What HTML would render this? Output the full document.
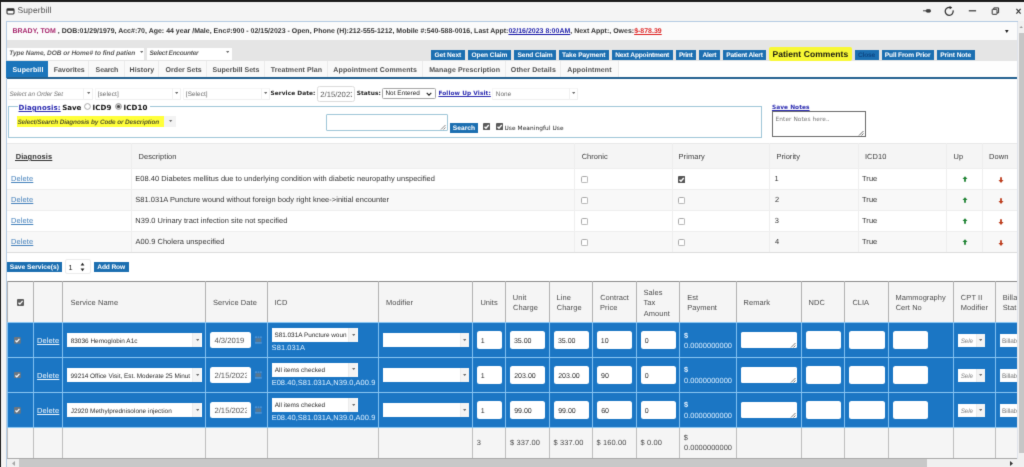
<!DOCTYPE html><html><head><meta charset="utf-8"><title>Superbill</title><style>
*{box-sizing:border-box;margin:0;padding:0}
html,body{width:1024px;height:467px;overflow:hidden;background:#fff}
body{position:relative;filter:url(#sf);text-rendering:geometricPrecision;font-family:"Liberation Sans",sans-serif;font-size:8px;color:#444}
.a{position:absolute;white-space:nowrap}
.t{position:absolute;white-space:nowrap;line-height:1}
.ver{font-family:"DejaVu Sans","Liberation Sans",sans-serif}
.btn{position:absolute;background:#1c6fb1;overflow:hidden}
.bt{position:absolute;white-space:nowrap;line-height:1;color:#fff;font-weight:bold}
.cb{position:absolute;background:#fff;overflow:hidden;white-space:nowrap}
.ar{position:absolute;width:0;height:0;border-left:2px solid transparent;border-right:2px solid transparent;border-top:2.4px solid #5a5a5a}
.inp{position:absolute;background:#fff;border-radius:2.5px;overflow:hidden;white-space:nowrap}
</style></head><body>
<svg width="0" height="0" style="position:absolute"><filter id="sf" x="0" y="0" width="100%" height="100%" color-interpolation-filters="sRGB"><feConvolveMatrix order="3" kernelMatrix="0.011 0.084 0.011 0.084 0.62 0.084 0.011 0.084 0.011" edgeMode="duplicate" preserveAlpha="true"/></filter></svg>
<div class="a" style="left:0px;top:0px;width:1024px;height:467px;background:#f4f4f4"></div>
<div class="a" style="left:0px;top:0px;width:1024px;height:1.8px;background:#1c1c1c"></div>
<div class="a" style="left:0px;top:0px;width:1.2px;height:467px;background:#1c1c1c"></div>
<svg class="a" style="left:6.2px;top:7.6px" width="9" height="7" viewBox="0 0 9 7"><rect x="1" y="0.9" width="7" height="5.1" rx="0.9" fill="#fff" stroke="#2a2a2a" stroke-width="1.1"/><rect x="1" y="0.9" width="7" height="1.8" rx="0.6" fill="#2a2a2a"/></svg>
<div class="t" style="left:17.42px;top:6px;font-size:8.5px;color:#505050;letter-spacing:0.12px;">Superbill</div>
<svg class="a" style="left:920px;top:4px" width="104" height="14" viewBox="0 0 104 14"><g fill="none" stroke="#333" stroke-width="1"><path d="M3 6.8 H6.2" stroke-width="0.9"/><rect x="6.2" y="5.6" width="4.3" height="2.6" rx="0.9" fill="#444" stroke="#222" stroke-width="0.6"/><path d="M31.3 3.9 A4 4 0 1 0 33.1 6.4" stroke-width="1.3"/><path d="M29.6 1.9 L32.2 3.6 L29.7 5.2 Z" stroke="none" fill="#2a2a2a"/><path d="M48.8 6.8 H56.1" stroke-width="1.2"/><rect x="72.2" y="5.3" width="4.8" height="5" rx="0.4"/><path d="M73.8 5.3 V3.9 H78.6 V8.8 H77"/><path d="M96.4 4.9 L100.6 9.6 M100.6 4.9 L96.4 9.6" stroke-width="1.15"/></g></svg>
<div class="a" style="left:6px;top:20.7px;width:1011.6px;height:446.3px;background:#fff;border:1px solid #b4cbe3;border-bottom:none"></div>
<div class="a" style="left:7px;top:21.7px;width:1009.6px;height:18.3px;background:#fbfbfb"></div>
<div class="t" style="left:12.51px;top:29px;font-size:6.95px;font-weight:bold;color:#333;letter-spacing:0.028px;"><span style="color:#a8286e">BRADY, TOM</span> , DOB:01/29/1979, Acc#:70, Age: 44 year /Male, Enc#:900 - 02/15/2023 - Open, Phone (H):212-555-1212, Mobile #:540-588-0016, Last Appt:<span style="color:#1a1aa8;text-decoration:underline">02/16/2023 8:00AM</span>, Next Appt:, Owes:<span style="color:#d22;text-decoration:underline">$-878.39</span></div>
<svg class="a" style="left:1005.3px;top:29.7px" width="3.6" height="3" viewBox="0 0 10 10" preserveAspectRatio="none"><path d="M0 0 H10 L5 10 Z" fill="#1a1a1a"/></svg>
<div class="a" style="left:7px;top:40px;width:1009.6px;height:21.3px;background:#e5e5e5"></div>
<div class="a" style="left:7px;top:47.5px;width:137px;height:12.7px;background:#fff"></div>
<div class="t" style="left:9.22px;top:51px;font-size:6.5px;font-style:italic;font-weight:bold;color:#5a5a5a;letter-spacing:-0.021px;">Type Name, DOB or Home# to find patien</div>
<svg class="a" style="left:139.75px;top:50.55px" width="3.3" height="2.1" viewBox="0 0 10 10" preserveAspectRatio="none"><path d="M0 0 H10 L5 10 Z" fill="#707070"/></svg>
<div class="a" style="left:146.75px;top:47.5px;width:85px;height:12.7px;background:#fff"></div>
<div class="t" style="left:149.55px;top:51px;font-size:6.5px;font-style:italic;font-weight:bold;color:#5a5a5a;letter-spacing:-0.275px;">Select Encounter</div>
<svg class="a" style="left:225.85px;top:50.55px" width="3.3" height="2.1" viewBox="0 0 10 10" preserveAspectRatio="none"><path d="M0 0 H10 L5 10 Z" fill="#707070"/></svg>
<div class="btn" style="left:431.1px;top:50px;width:33.89999999999998px;height:10px;"></div>
<div class="bt" style="left:434.47px;top:53px;font-size:6.6px;color:#fff;letter-spacing:-0.045px;">Get Next</div>
<div class="btn" style="left:468px;top:50px;width:42.89999999999998px;height:10px;"></div>
<div class="bt" style="left:471.41px;top:53px;font-size:6.6px;color:#fff;letter-spacing:-0.066px;">Open Claim</div>
<div class="btn" style="left:514.25px;top:50px;width:41.75px;height:10px;"></div>
<div class="bt" style="left:517.51px;top:53px;font-size:6.6px;color:#fff;letter-spacing:-0.09px;">Send Claim</div>
<div class="btn" style="left:558.9px;top:50px;width:50.0px;height:10px;"></div>
<div class="bt" style="left:562.03px;top:53px;font-size:6.6px;color:#fff;letter-spacing:-0.05px;">Take Payment</div>
<div class="btn" style="left:612px;top:50px;width:60.75px;height:10px;"></div>
<div class="bt" style="left:615.29px;top:53px;font-size:6.6px;color:#fff;letter-spacing:-0.17px;">Next Appointment</div>
<div class="btn" style="left:675.6px;top:50px;width:20.649999999999977px;height:10px;"></div>
<div class="bt" style="left:678.94px;top:53px;font-size:6.6px;color:#fff;letter-spacing:-0.291px;">Print</div>
<div class="btn" style="left:699.1px;top:50px;width:20.899999999999977px;height:10px;"></div>
<div class="bt" style="left:702.48px;top:53px;font-size:6.6px;color:#fff;letter-spacing:-0.232px;">Alert</div>
<div class="btn" style="left:722.9px;top:50px;width:43.60000000000002px;height:10px;"></div>
<div class="bt" style="left:726.24px;top:53px;font-size:6.6px;color:#fff;letter-spacing:-0.164px;">Patient Alert</div>
<div class="btn" style="left:881.5px;top:50px;width:52.39999999999998px;height:10px;"></div>
<div class="bt" style="left:884.8px;top:53px;font-size:6.6px;color:#fff;letter-spacing:-0.135px;">Pull From Prior</div>
<div class="btn" style="left:937px;top:50px;width:37.5px;height:10px;"></div>
<div class="bt" style="left:940.29px;top:53px;font-size:6.6px;color:#fff;letter-spacing:-0.078px;">Print Note</div>
<div class="btn" style="left:854.6px;top:50px;width:24.0px;height:10px;"></div>
<div class="bt" style="left:858.02px;top:53px;font-size:6.6px;color:#0e4683;letter-spacing:-0.205px;">Close</div>
<div class="a" style="left:769.25px;top:47.25px;width:82.5px;height:13.4px;background:#f8f835;border-radius:2px"></div>
<div class="t" style="left:772.4px;top:50px;font-size:8.5px;font-weight:bold;color:#1a1a10;letter-spacing:0.078px;">Patient Comments</div>
<div class="a" style="left:7px;top:61.3px;width:1009.6px;height:16px;background:#fefefe"></div>
<div class="a" style="left:6.25px;top:61px;width:41.85px;height:17px;background:#1b75bb"></div>
<div class="t" style="left:12.48px;top:67px;font-size:7.0px;font-weight:bold;color:#fff;letter-spacing:0.12px;">Superbill</div>
<div class="a" style="left:48.1px;top:61.3px;width:41.300000000000004px;height:16px;background:#f9f9f9;border-right:1px solid #ebebeb"></div>
<div class="t" style="left:53.66px;top:67px;font-size:7.0px;font-weight:bold;color:#505050;letter-spacing:-0.007px;">Favorites</div>
<div class="a" style="left:89.4px;top:61.3px;width:35.19999999999999px;height:16px;background:#f9f9f9;border-right:1px solid #ebebeb"></div>
<div class="t" style="left:95.6px;top:67px;font-size:7.0px;font-weight:bold;color:#505050;letter-spacing:-0.125px;">Search</div>
<div class="a" style="left:124.6px;top:61.3px;width:34.650000000000006px;height:16px;background:#f9f9f9;border-right:1px solid #ebebeb"></div>
<div class="t" style="left:129.5px;top:67px;font-size:7.0px;font-weight:bold;color:#505050;letter-spacing:0.106px;">History</div>
<div class="a" style="left:159.25px;top:61.3px;width:47.25px;height:16px;background:#f9f9f9;border-right:1px solid #ebebeb"></div>
<div class="t" style="left:165.62px;top:67px;font-size:7.0px;font-weight:bold;color:#505050;letter-spacing:0.039px;">Order Sets</div>
<div class="a" style="left:206.5px;top:61.3px;width:58.25px;height:16px;background:#f9f9f9;border-right:1px solid #ebebeb"></div>
<div class="t" style="left:212.53px;top:67px;font-size:7.0px;font-weight:bold;color:#505050;letter-spacing:0.01px;">Superbill Sets</div>
<div class="a" style="left:264.75px;top:61.3px;width:62.75px;height:16px;background:#f9f9f9;border-right:1px solid #ebebeb"></div>
<div class="t" style="left:270.65px;top:67px;font-size:7.0px;font-weight:bold;color:#505050;letter-spacing:0.096px;">Treatment Plan</div>
<div class="a" style="left:327.5px;top:61.3px;width:95.89999999999998px;height:16px;background:#f9f9f9;border-right:1px solid #ebebeb"></div>
<div class="t" style="left:333.34px;top:67px;font-size:7.0px;font-weight:bold;color:#505050;letter-spacing:0.12px;">Appointment Comments</div>
<div class="a" style="left:423.4px;top:61.3px;width:82.5px;height:16px;background:#f9f9f9;border-right:1px solid #ebebeb"></div>
<div class="t" style="left:429.16px;top:67px;font-size:7.0px;font-weight:bold;color:#505050;letter-spacing:0.11px;">Manage Prescription</div>
<div class="a" style="left:505.9px;top:61.3px;width:55.5px;height:16px;background:#f9f9f9;border-right:1px solid #ebebeb"></div>
<div class="t" style="left:510.82px;top:67px;font-size:7.0px;font-weight:bold;color:#505050;letter-spacing:0.12px;">Other Details</div>
<div class="a" style="left:561.4px;top:61.3px;width:57.60000000000002px;height:16px;background:#f9f9f9;border-right:1px solid #ebebeb"></div>
<div class="t" style="left:567.23px;top:67px;font-size:7.0px;font-weight:bold;color:#505050;letter-spacing:0.12px;">Appointment</div>
<div class="a" style="left:7px;top:77.25px;width:1010.6px;height:1.8px;background:#23608f"></div>
<div class="a" style="left:8.4px;top:88.4px;width:84.19999999999999px;height:11.4px;background:#fff;border:1px solid #f0f0f0;border-top-color:#f6f6f6;border-left-color:#f6f6f6"></div>
<div class="a" style="left:83.3px;top:88.4px;width:1px;height:11.4px;background:#f1f1f1"></div>
<div class="t" style="left:9.46px;top:92px;font-size:6.4px;font-style:italic;color:#7a7a7a;letter-spacing:-0.145px;">Select an Order Set</div>
<svg class="a" style="left:86.5px;top:92.35px" width="3.3" height="2.1" viewBox="0 0 10 10" preserveAspectRatio="none"><path d="M0 0 H10 L5 10 Z" fill="#707070"/></svg>
<div class="a" style="left:95px;top:88.4px;width:85.80000000000001px;height:11.4px;background:#fff;border:1px solid #f0f0f0;border-top-color:#f6f6f6;border-left-color:#f6f6f6"></div>
<div class="a" style="left:171.5px;top:88.4px;width:1px;height:11.4px;background:#f1f1f1"></div>
<div class="t" style="left:97.64px;top:92px;font-size:6.4px;color:#6a6a6a;letter-spacing:0.12px;">[select]</div>
<svg class="a" style="left:174.7px;top:92.35px" width="3.3" height="2.1" viewBox="0 0 10 10" preserveAspectRatio="none"><path d="M0 0 H10 L5 10 Z" fill="#707070"/></svg>
<div class="a" style="left:183.25px;top:88.4px;width:86.75px;height:11.4px;background:#fff;border:1px solid #f0f0f0;border-top-color:#f6f6f6;border-left-color:#f6f6f6"></div>
<div class="a" style="left:260.7px;top:88.4px;width:1px;height:11.4px;background:#f1f1f1"></div>
<div class="t" style="left:185.8px;top:92px;font-size:6.4px;color:#6a6a6a;letter-spacing:0.076px;">[Select]</div>
<svg class="a" style="left:263.9px;top:92.35px" width="3.3" height="2.1" viewBox="0 0 10 10" preserveAspectRatio="none"><path d="M0 0 H10 L5 10 Z" fill="#707070"/></svg>
<div class="t ver" style="left:270.45px;top:92px;font-size:5.85px;font-weight:bold;color:#222;letter-spacing:0.067px;">Service Date:</div>
<div class="a" style="left:317.25px;top:85.6px;width:37.5px;height:16px;border:1px solid #dcdcdc;background:#fff;border-radius:2.5px;overflow:hidden"></div>
<div class="a" style="left:318.3px;top:88px;width:34.0px;height:16.0px;overflow:hidden"><div class="t" style="left:1.96px;top:3px;font-size:7.7px;color:#5a5a5a;">2/15/2023</div></div>
<div class="t ver" style="left:356.72px;top:92px;font-size:5.85px;font-weight:bold;color:#222;letter-spacing:0.054px;">Status:</div>
<div class="a" style="left:382px;top:88.1px;width:54px;height:10.6px;border:1px solid #a6a6a6;border-radius:1.5px;background:#fff"></div>
<div class="t" style="left:385.49px;top:91px;font-size:6.4px;color:#222;letter-spacing:0.025px;">Not Entered</div>
<svg class="a" style="left:426.4px;top:91.6px" width="6" height="4.4" viewBox="0 0 6 4.4"><path d="M0.7 0.8 L3 3.2 L5.3 0.8" fill="none" stroke="#222" stroke-width="1.1"/></svg>
<div class="t ver" style="left:438.44px;top:92px;font-size:5.85px;font-weight:bold;color:#2a2ab0;text-decoration:underline;letter-spacing:0.073px;">Follow Up Visit:</div>
<div class="a" style="left:492px;top:88.4px;width:86.25px;height:11.4px;background:#fff;border:1px solid #f0f0f0;border-top-color:#f6f6f6;border-left-color:#f6f6f6"></div>
<div class="a" style="left:568.95px;top:88.4px;width:1px;height:11.4px;background:#f1f1f1"></div>
<div class="t" style="left:495.69px;top:92px;font-size:6.4px;color:#6a6a6a;letter-spacing:0.12px;">None</div>
<svg class="a" style="left:572.15px;top:92.35px" width="3.3" height="2.1" viewBox="0 0 10 10" preserveAspectRatio="none"><path d="M0 0 H10 L5 10 Z" fill="#707070"/></svg>
<div class="a" style="left:8.4px;top:106.4px;width:753.4px;height:31.4px;border:1px solid #9ec6d8;background:#fff"></div>
<div class="a" style="left:17.5px;top:103px;width:132.5px;height:9px;background:#fff"></div>
<div class="t ver" style="left:18.54px;top:104px;font-size:7.05px;font-weight:bold;color:#2a2ab0;text-decoration:underline;letter-spacing:0.063px;">Diagnosis:</div>
<div class="t ver" style="left:62.3px;top:104px;font-size:7.05px;font-weight:bold;color:#111;letter-spacing:-0.035px;">Save</div>
<svg class="a" style="left:83.5px;top:103.2px" width="7" height="7" viewBox="0 0 7 7"><circle cx="3.5" cy="3.5" r="2.9" fill="#fff" stroke="#a0a0a0" stroke-width="0.9"/></svg>
<div class="t ver" style="left:92.44px;top:104px;font-size:7.05px;font-weight:bold;color:#111;letter-spacing:0.12px;">ICD9</div>
<svg class="a" style="left:115.2px;top:103.2px" width="7" height="7" viewBox="0 0 7 7"><circle cx="3.5" cy="3.5" r="2.9" fill="#d8d8d8" stroke="#909090" stroke-width="0.9"/><circle cx="3.5" cy="3.5" r="1.6" fill="#4a4a4a"/></svg>
<div class="t ver" style="left:123.44px;top:104px;font-size:7.05px;font-weight:bold;color:#111;letter-spacing:0.12px;">ICD10</div>
<div class="a" style="left:17.2px;top:115.7px;width:146.8px;height:11.3px;background:#ffff3a"></div>
<div class="t" style="left:17.42px;top:120px;font-size:6.4px;font-style:italic;font-weight:bold;color:#55552a;letter-spacing:-0.102px;">Select/Search Diagnosis by Code or Description</div>
<div class="a" style="left:164px;top:115.7px;width:11.9px;height:11.3px;background:#f3f3f3"></div>
<svg class="a" style="left:169.35px;top:119.95px" width="3.3" height="2.1" viewBox="0 0 10 10" preserveAspectRatio="none"><path d="M0 0 H10 L5 10 Z" fill="#707070"/></svg>
<div class="a" style="left:326px;top:113.5px;width:121.6px;height:17px;border:1px solid #9ec6d8;background:#fff;border-radius:1px"></div>
<svg class="a" style="left:440px;top:124px" width="6" height="6" viewBox="0 0 6 6"><path d="M5.5 1 L1 5.5 M5.5 3.5 L3.5 5.5" stroke="#666" stroke-width="0.8" fill="none"/></svg>
<div class="btn" style="left:450px;top:123px;width:28px;height:9.5px;"></div>
<div class="bt" style="left:452.86px;top:126px;font-size:6.6px;color:#fff;letter-spacing:0.015px;">Search</div>
<svg class="a" style="left:483px;top:123.3px" width="7.2" height="7.2" viewBox="0 0 8 8"><rect x="0" y="0" width="8" height="8" rx="1.2" fill="#5a5a5a"/><path d="M1.7 4.2 L3.3 5.8 L6.4 2.2" fill="none" stroke="#fff" stroke-width="1.5"/></svg>
<svg class="a" style="left:495.8px;top:123.3px" width="7.2" height="7.2" viewBox="0 0 8 8"><rect x="0" y="0" width="8" height="8" rx="1.2" fill="#5a5a5a"/><path d="M1.7 4.2 L3.3 5.8 L6.4 2.2" fill="none" stroke="#fff" stroke-width="1.5"/></svg>
<div class="t ver" style="left:504.54px;top:127px;font-size:5.85px;color:#222;letter-spacing:0.062px;">Use Meaningful Use</div>
<div class="t ver" style="left:771.94px;top:106px;font-size:5.85px;font-weight:bold;color:#2a2ab0;text-decoration:underline;letter-spacing:0.056px;">Save Notes</div>
<div class="a" style="left:772px;top:111px;width:94px;height:26px;border:1px solid #6a6a6a;background:#fff"></div>
<div class="t ver" style="left:775.51px;top:118px;font-size:5.85px;color:#777;letter-spacing:0.063px;">Enter Notes here..</div>
<svg class="a" style="left:858px;top:129.5px" width="6" height="6" viewBox="0 0 6 6"><path d="M5.5 1 L1 5.5 M5.5 3.5 L3.5 5.5" stroke="#444" stroke-width="0.8" fill="none"/></svg>
<div class="a" style="left:7px;top:143px;width:1009.8px;height:25px;background:#f5f5f5;border-top:1px solid #e8e8e8"></div>
<div class="a" style="left:7px;top:168px;width:1009.8px;height:21px;background:#fff;border-top:1px solid #eeeeee"></div>
<div class="t" style="left:11.07px;top:175px;font-size:7.45px;color:#4682bc;text-decoration:underline;letter-spacing:0.12px;">Delete</div>
<div class="t" style="left:135.33px;top:175px;font-size:7.45px;color:#333;letter-spacing:0.05px;">E08.40 Diabetes mellitus due to underlying condition with diabetic neuropathy unspecified</div>
<svg class="a" style="left:580.8px;top:176px" width="7.2" height="7.2" viewBox="0 0 8 8"><rect x="0.55" y="0.55" width="6.9" height="6.9" rx="1.4" fill="#fff" stroke="#a8a8a8" stroke-width="1.1"/></svg>
<svg class="a" style="left:678px;top:176px" width="7.2" height="7.2" viewBox="0 0 8 8"><rect x="0" y="0" width="8" height="8" rx="1.2" fill="#555"/><path d="M1.7 4.2 L3.3 5.8 L6.4 2.2" fill="none" stroke="#fff" stroke-width="1.5"/></svg>
<div class="t" style="left:774.56px;top:175px;font-size:7.45px;color:#333;">1</div>
<div class="t" style="left:862.04px;top:175px;font-size:7.45px;color:#333;letter-spacing:0.063px;">True</div>
<svg class="a" style="left:962.2px;top:176.3px" width="6" height="6" viewBox="0 0 6 6"><path d="M3 0.2 L5.5 2.9 H3.9 V5.7 H2.1 V2.9 H0.5 Z" fill="#1d8232"/></svg>
<svg class="a" style="left:997.6px;top:176.7px" width="6" height="6" viewBox="0 0 6 6"><path d="M3 5.9 L5.5 3.1 H3.9 V0.3 H2.1 V3.1 H0.5 Z" fill="#bd3c1c"/></svg>
<div class="a" style="left:7px;top:189px;width:1009.8px;height:21px;background:#f8f8f8;border-top:1px solid #eeeeee"></div>
<div class="t" style="left:11.07px;top:196px;font-size:7.45px;color:#4682bc;text-decoration:underline;letter-spacing:0.12px;">Delete</div>
<div class="t" style="left:135.31px;top:196px;font-size:7.45px;color:#333;letter-spacing:0.046px;">S81.031A Puncture wound without foreign body right knee-&gt;initial encounter</div>
<svg class="a" style="left:580.8px;top:197px" width="7.2" height="7.2" viewBox="0 0 8 8"><rect x="0.55" y="0.55" width="6.9" height="6.9" rx="1.4" fill="#fff" stroke="#a8a8a8" stroke-width="1.1"/></svg>
<svg class="a" style="left:678px;top:197px" width="7.2" height="7.2" viewBox="0 0 8 8"><rect x="0.55" y="0.55" width="6.9" height="6.9" rx="1.4" fill="#fff" stroke="#a8a8a8" stroke-width="1.1"/></svg>
<div class="t" style="left:775.02px;top:196px;font-size:7.45px;color:#333;">2</div>
<div class="t" style="left:862.04px;top:196px;font-size:7.45px;color:#333;letter-spacing:0.063px;">True</div>
<svg class="a" style="left:962.2px;top:197.3px" width="6" height="6" viewBox="0 0 6 6"><path d="M3 0.2 L5.5 2.9 H3.9 V5.7 H2.1 V2.9 H0.5 Z" fill="#1d8232"/></svg>
<svg class="a" style="left:997.6px;top:197.7px" width="6" height="6" viewBox="0 0 6 6"><path d="M3 5.9 L5.5 3.1 H3.9 V0.3 H2.1 V3.1 H0.5 Z" fill="#bd3c1c"/></svg>
<div class="a" style="left:7px;top:210px;width:1009.8px;height:21px;background:#fff;border-top:1px solid #eeeeee"></div>
<div class="t" style="left:11.07px;top:217px;font-size:7.45px;color:#4682bc;text-decoration:underline;letter-spacing:0.12px;">Delete</div>
<div class="t" style="left:135.36px;top:217px;font-size:7.45px;color:#333;letter-spacing:0.049px;">N39.0 Urinary tract infection site not specified</div>
<svg class="a" style="left:580.8px;top:218px" width="7.2" height="7.2" viewBox="0 0 8 8"><rect x="0.55" y="0.55" width="6.9" height="6.9" rx="1.4" fill="#fff" stroke="#a8a8a8" stroke-width="1.1"/></svg>
<svg class="a" style="left:678px;top:218px" width="7.2" height="7.2" viewBox="0 0 8 8"><rect x="0.55" y="0.55" width="6.9" height="6.9" rx="1.4" fill="#fff" stroke="#a8a8a8" stroke-width="1.1"/></svg>
<div class="t" style="left:774.64px;top:217px;font-size:7.45px;color:#333;">3</div>
<div class="t" style="left:862.04px;top:217px;font-size:7.45px;color:#333;letter-spacing:0.063px;">True</div>
<svg class="a" style="left:962.2px;top:218.3px" width="6" height="6" viewBox="0 0 6 6"><path d="M3 0.2 L5.5 2.9 H3.9 V5.7 H2.1 V2.9 H0.5 Z" fill="#1d8232"/></svg>
<svg class="a" style="left:997.6px;top:218.7px" width="6" height="6" viewBox="0 0 6 6"><path d="M3 5.9 L5.5 3.1 H3.9 V0.3 H2.1 V3.1 H0.5 Z" fill="#bd3c1c"/></svg>
<div class="a" style="left:7px;top:231px;width:1009.8px;height:21px;background:#f8f8f8;border-top:1px solid #eeeeee"></div>
<div class="t" style="left:11.07px;top:238px;font-size:7.45px;color:#4682bc;text-decoration:underline;letter-spacing:0.12px;">Delete</div>
<div class="t" style="left:135.59px;top:238px;font-size:7.45px;color:#333;letter-spacing:0.067px;">A00.9 Cholera unspecified</div>
<svg class="a" style="left:580.8px;top:239px" width="7.2" height="7.2" viewBox="0 0 8 8"><rect x="0.55" y="0.55" width="6.9" height="6.9" rx="1.4" fill="#fff" stroke="#a8a8a8" stroke-width="1.1"/></svg>
<svg class="a" style="left:678px;top:239px" width="7.2" height="7.2" viewBox="0 0 8 8"><rect x="0.55" y="0.55" width="6.9" height="6.9" rx="1.4" fill="#fff" stroke="#a8a8a8" stroke-width="1.1"/></svg>
<div class="t" style="left:775.02px;top:238px;font-size:7.45px;color:#333;">4</div>
<div class="t" style="left:862.04px;top:238px;font-size:7.45px;color:#333;letter-spacing:0.063px;">True</div>
<svg class="a" style="left:962.2px;top:239.3px" width="6" height="6" viewBox="0 0 6 6"><path d="M3 0.2 L5.5 2.9 H3.9 V5.7 H2.1 V2.9 H0.5 Z" fill="#1d8232"/></svg>
<svg class="a" style="left:997.6px;top:239.7px" width="6" height="6" viewBox="0 0 6 6"><path d="M3 5.9 L5.5 3.1 H3.9 V0.3 H2.1 V3.1 H0.5 Z" fill="#bd3c1c"/></svg>
<div class="a" style="left:7px;top:252px;width:1009.8px;height:1px;background:#ddd"></div>
<div class="a" style="left:130.5px;top:143px;width:1px;height:109px;background:#eeeeee"></div>
<div class="a" style="left:573.5px;top:143px;width:1px;height:109px;background:#eeeeee"></div>
<div class="a" style="left:671.5px;top:143px;width:1px;height:109px;background:#eeeeee"></div>
<div class="a" style="left:768.5px;top:143px;width:1px;height:109px;background:#eeeeee"></div>
<div class="a" style="left:857.5px;top:143px;width:1px;height:109px;background:#eeeeee"></div>
<div class="a" style="left:946.0px;top:143px;width:1px;height:109px;background:#eeeeee"></div>
<div class="a" style="left:981.5px;top:143px;width:1px;height:109px;background:#eeeeee"></div>
<div class="t" style="left:15.7px;top:153px;font-size:7.45px;color:#333;font-weight:bold;text-decoration:underline;letter-spacing:0.12px;">Diagnosis</div>
<div class="a" style="left:15px;top:160.2px;width:2px;height:0.7px;background:#333"></div>
<div class="t" style="left:138.47px;top:153px;font-size:7.45px;color:#3a3a3a;letter-spacing:0.08px;">Description</div>
<div class="t" style="left:581.67px;top:153px;font-size:7.45px;color:#3a3a3a;letter-spacing:0.066px;">Chronic</div>
<div class="t" style="left:678.49px;top:153px;font-size:7.45px;color:#3a3a3a;letter-spacing:0.12px;">Primary</div>
<div class="t" style="left:776.47px;top:153px;font-size:7.45px;color:#3a3a3a;letter-spacing:0.041px;">Priority</div>
<div class="t" style="left:864.89px;top:153px;font-size:7.45px;color:#3a3a3a;letter-spacing:0.12px;">ICD10</div>
<div class="t" style="left:953.48px;top:153px;font-size:7.45px;color:#3a3a3a;letter-spacing:0.12px;">Up</div>
<div class="t" style="left:988.99px;top:153px;font-size:7.45px;color:#3a3a3a;letter-spacing:0.12px;">Down</div>
<div class="btn" style="left:6.8px;top:262px;width:55.2px;height:10px;"></div>
<div class="bt" style="left:9.72px;top:265px;font-size:6.6px;color:#fff;letter-spacing:0.029px;">Save Service(s)</div>
<div class="a" style="left:65px;top:259.3px;width:25.8px;height:14.8px;border:1px solid #ececec;border-radius:2px;background:#fff"></div>
<div class="t" style="left:68.56px;top:264px;font-size:7.3px;color:#222;">1</div>
<svg class="a" style="left:80px;top:262px" width="5" height="10" viewBox="0 0 5 10"><path d="M2.5 0.8 L4.4 3.6 H0.6 Z M2.5 9.2 L4.4 6.4 H0.6 Z" fill="#222"/></svg>
<div class="btn" style="left:94px;top:262px;width:34.69999999999999px;height:10px;"></div>
<div class="bt" style="left:97.29px;top:265px;font-size:6.6px;color:#fff;letter-spacing:-0.119px;">Add Row</div>
<div class="a" style="left:7px;top:280.7px;width:1009.8px;height:177.5px;background:#f5f5f5;border-top:1px solid #8c8c8c"></div>
<div class="a" style="left:7px;top:322.4px;width:1009.8px;height:104.90000000000003px;background:#1b76c4"></div>
<div class="a" style="left:6.7px;top:280.7px;width:1px;height:41.69999999999999px;background:#b0b0b0"></div>
<div class="a" style="left:6.7px;top:322.4px;width:1px;height:104.90000000000003px;background:#80bff0"></div>
<div class="a" style="left:6.7px;top:427.3px;width:1px;height:30.899999999999977px;background:#bdbdbd"></div>
<div class="a" style="left:32.6px;top:280.7px;width:1px;height:41.69999999999999px;background:#b0b0b0"></div>
<div class="a" style="left:32.6px;top:322.4px;width:1px;height:104.90000000000003px;background:#80bff0"></div>
<div class="a" style="left:32.6px;top:427.3px;width:1px;height:30.899999999999977px;background:#bdbdbd"></div>
<div class="a" style="left:62.3px;top:280.7px;width:1px;height:41.69999999999999px;background:#b0b0b0"></div>
<div class="a" style="left:62.3px;top:322.4px;width:1px;height:104.90000000000003px;background:#80bff0"></div>
<div class="a" style="left:62.3px;top:427.3px;width:1px;height:30.899999999999977px;background:#bdbdbd"></div>
<div class="a" style="left:205.0px;top:280.7px;width:1px;height:41.69999999999999px;background:#b0b0b0"></div>
<div class="a" style="left:205.0px;top:322.4px;width:1px;height:104.90000000000003px;background:#80bff0"></div>
<div class="a" style="left:205.0px;top:427.3px;width:1px;height:30.899999999999977px;background:#bdbdbd"></div>
<div class="a" style="left:266.75px;top:280.7px;width:1px;height:41.69999999999999px;background:#b0b0b0"></div>
<div class="a" style="left:266.75px;top:322.4px;width:1px;height:104.90000000000003px;background:#80bff0"></div>
<div class="a" style="left:266.75px;top:427.3px;width:1px;height:30.899999999999977px;background:#bdbdbd"></div>
<div class="a" style="left:378.0px;top:280.7px;width:1px;height:41.69999999999999px;background:#b0b0b0"></div>
<div class="a" style="left:378.0px;top:322.4px;width:1px;height:104.90000000000003px;background:#80bff0"></div>
<div class="a" style="left:378.0px;top:427.3px;width:1px;height:30.899999999999977px;background:#bdbdbd"></div>
<div class="a" style="left:472.4px;top:280.7px;width:1px;height:41.69999999999999px;background:#b0b0b0"></div>
<div class="a" style="left:472.4px;top:322.4px;width:1px;height:104.90000000000003px;background:#80bff0"></div>
<div class="a" style="left:472.4px;top:427.3px;width:1px;height:30.899999999999977px;background:#bdbdbd"></div>
<div class="a" style="left:504.9px;top:280.7px;width:1px;height:41.69999999999999px;background:#b0b0b0"></div>
<div class="a" style="left:504.9px;top:322.4px;width:1px;height:104.90000000000003px;background:#80bff0"></div>
<div class="a" style="left:504.9px;top:427.3px;width:1px;height:30.899999999999977px;background:#bdbdbd"></div>
<div class="a" style="left:548.6px;top:280.7px;width:1px;height:41.69999999999999px;background:#b0b0b0"></div>
<div class="a" style="left:548.6px;top:322.4px;width:1px;height:104.90000000000003px;background:#80bff0"></div>
<div class="a" style="left:548.6px;top:427.3px;width:1px;height:30.899999999999977px;background:#bdbdbd"></div>
<div class="a" style="left:592.1px;top:280.7px;width:1px;height:41.69999999999999px;background:#b0b0b0"></div>
<div class="a" style="left:592.1px;top:322.4px;width:1px;height:104.90000000000003px;background:#80bff0"></div>
<div class="a" style="left:592.1px;top:427.3px;width:1px;height:30.899999999999977px;background:#bdbdbd"></div>
<div class="a" style="left:635.9px;top:280.7px;width:1px;height:41.69999999999999px;background:#b0b0b0"></div>
<div class="a" style="left:635.9px;top:322.4px;width:1px;height:104.90000000000003px;background:#80bff0"></div>
<div class="a" style="left:635.9px;top:427.3px;width:1px;height:30.899999999999977px;background:#bdbdbd"></div>
<div class="a" style="left:678.9px;top:280.7px;width:1px;height:41.69999999999999px;background:#b0b0b0"></div>
<div class="a" style="left:678.9px;top:322.4px;width:1px;height:104.90000000000003px;background:#80bff0"></div>
<div class="a" style="left:678.9px;top:427.3px;width:1px;height:30.899999999999977px;background:#bdbdbd"></div>
<div class="a" style="left:735.7px;top:280.7px;width:1px;height:41.69999999999999px;background:#b0b0b0"></div>
<div class="a" style="left:735.7px;top:322.4px;width:1px;height:104.90000000000003px;background:#80bff0"></div>
<div class="a" style="left:735.7px;top:427.3px;width:1px;height:30.899999999999977px;background:#bdbdbd"></div>
<div class="a" style="left:800.9px;top:280.7px;width:1px;height:41.69999999999999px;background:#b0b0b0"></div>
<div class="a" style="left:800.9px;top:322.4px;width:1px;height:104.90000000000003px;background:#80bff0"></div>
<div class="a" style="left:800.9px;top:427.3px;width:1px;height:30.899999999999977px;background:#bdbdbd"></div>
<div class="a" style="left:844.4px;top:280.7px;width:1px;height:41.69999999999999px;background:#b0b0b0"></div>
<div class="a" style="left:844.4px;top:322.4px;width:1px;height:104.90000000000003px;background:#80bff0"></div>
<div class="a" style="left:844.4px;top:427.3px;width:1px;height:30.899999999999977px;background:#bdbdbd"></div>
<div class="a" style="left:887.7px;top:280.7px;width:1px;height:41.69999999999999px;background:#b0b0b0"></div>
<div class="a" style="left:887.7px;top:322.4px;width:1px;height:104.90000000000003px;background:#80bff0"></div>
<div class="a" style="left:887.7px;top:427.3px;width:1px;height:30.899999999999977px;background:#bdbdbd"></div>
<div class="a" style="left:952.9px;top:280.7px;width:1px;height:41.69999999999999px;background:#b0b0b0"></div>
<div class="a" style="left:952.9px;top:322.4px;width:1px;height:104.90000000000003px;background:#80bff0"></div>
<div class="a" style="left:952.9px;top:427.3px;width:1px;height:30.899999999999977px;background:#bdbdbd"></div>
<div class="a" style="left:994.9px;top:280.7px;width:1px;height:41.69999999999999px;background:#b0b0b0"></div>
<div class="a" style="left:994.9px;top:322.4px;width:1px;height:104.90000000000003px;background:#80bff0"></div>
<div class="a" style="left:994.9px;top:427.3px;width:1px;height:30.899999999999977px;background:#bdbdbd"></div>
<div class="a" style="left:7px;top:321.9px;width:1009.8px;height:1px;background:#8ac6f2"></div>
<div class="a" style="left:7px;top:356.6px;width:1009.8px;height:1px;background:#8ac6f2"></div>
<div class="a" style="left:7px;top:391.9px;width:1009.8px;height:1px;background:#8ac6f2"></div>
<div class="a" style="left:7px;top:426.8px;width:1009.8px;height:1px;background:#8ac6f2"></div>
<div class="a" style="left:7px;top:457.7px;width:1009.8px;height:1px;background:#b0b0b0"></div>
<svg class="a" style="left:17.1px;top:299.3px" width="7" height="7" viewBox="0 0 8 8"><rect x="0" y="0" width="8" height="8" rx="1.2" fill="#5e5e5e"/><path d="M1.7 4.2 L3.3 5.8 L6.4 2.2" fill="none" stroke="#fff" stroke-width="1.5"/></svg>
<div class="t" style="left:70.41px;top:299px;font-size:7.45px;color:#4c4c4c;letter-spacing:0.083px;">Service Name</div>
<div class="t" style="left:213.01px;top:299px;font-size:7.45px;color:#4c4c4c;letter-spacing:0.12px;">Service Date</div>
<div class="t" style="left:274.4px;top:299px;font-size:7.45px;color:#4c4c4c;letter-spacing:0.12px;">ICD</div>
<div class="t" style="left:386.0px;top:299px;font-size:7.45px;color:#4c4c4c;letter-spacing:0.059px;">Modifier</div>
<div class="t" style="left:480.38px;top:299px;font-size:7.45px;color:#4c4c4c;letter-spacing:0.095px;">Units</div>
<div class="t" style="left:512.73px;top:294px;font-size:7.45px;color:#4c4c4c;letter-spacing:0.12px;">Unit</div>
<div class="t" style="left:512.92px;top:304px;font-size:7.45px;color:#4c4c4c;letter-spacing:0.12px;">Charge</div>
<div class="t" style="left:556.49px;top:294px;font-size:7.45px;color:#4c4c4c;letter-spacing:0.12px;">Line</div>
<div class="t" style="left:556.67px;top:304px;font-size:7.45px;color:#4c4c4c;letter-spacing:0.102px;">Charge</div>
<div class="t" style="left:600.16px;top:294px;font-size:7.45px;color:#4c4c4c;letter-spacing:0.086px;">Contract</div>
<div class="t" style="left:599.99px;top:304px;font-size:7.45px;color:#4c4c4c;letter-spacing:0.12px;">Price</div>
<div class="t" style="left:643.41px;top:289px;font-size:7.45px;color:#4c4c4c;letter-spacing:0.12px;">Sales</div>
<div class="t" style="left:643.45px;top:299px;font-size:7.45px;color:#4c4c4c;letter-spacing:0.12px;">Tax</div>
<div class="t" style="left:643.7px;top:310px;font-size:7.45px;color:#4c4c4c;letter-spacing:0.12px;">Amount</div>
<div class="t" style="left:687.18px;top:294px;font-size:7.45px;color:#4c4c4c;letter-spacing:0.12px;">Est</div>
<div class="t" style="left:687.22px;top:304px;font-size:7.45px;color:#4c4c4c;letter-spacing:0.062px;">Payment</div>
<div class="t" style="left:743.43px;top:299px;font-size:7.45px;color:#4c4c4c;letter-spacing:0.12px;">Remark</div>
<div class="t" style="left:808.48px;top:299px;font-size:7.45px;color:#4c4c4c;letter-spacing:0.12px;">NDC</div>
<div class="t" style="left:852.39px;top:299px;font-size:7.45px;color:#4c4c4c;letter-spacing:0.049px;">CLIA</div>
<div class="t" style="left:895.51px;top:294px;font-size:7.45px;color:#4c4c4c;letter-spacing:0.059px;">Mammography</div>
<div class="t" style="left:895.65px;top:304px;font-size:7.45px;color:#4c4c4c;letter-spacing:0.081px;">Cert No</div>
<div class="t" style="left:960.84px;top:294px;font-size:7.45px;color:#4c4c4c;letter-spacing:0.12px;">CPT II</div>
<div class="t" style="left:960.75px;top:304px;font-size:7.45px;color:#4c4c4c;letter-spacing:0.095px;">Modifier</div>
<div class="a" style="left:1001.25px;top:291px;width:15.55px;height:15.7px;overflow:hidden"><div class="t" style="left:1.49px;top:3px;font-size:7.45px;color:#4c4c4c;letter-spacing:0.12px;">Billa</div></div>
<div class="a" style="left:1001.25px;top:301px;width:15.55px;height:15.7px;overflow:hidden"><div class="t" style="left:1.41px;top:3px;font-size:7.45px;color:#4c4c4c;letter-spacing:0.12px;">Stat</div></div>
<svg class="a" style="left:14.4px;top:337.0px" width="6.8" height="6.8" viewBox="0 0 8 8"><rect x="0" y="0" width="8" height="8" rx="1.2" fill="#6c7680"/><path d="M1.7 4.2 L3.3 5.8 L6.4 2.2" fill="none" stroke="#fff" stroke-width="1.5"/></svg>
<div class="t" style="left:37.07px;top:337px;font-size:7.45px;color:#f0f6fc;text-decoration:underline;letter-spacing:0.12px;">Delete</div>
<div class="cb" style="left:67px;top:333.4px;width:134.5px;height:14px;"></div>
<div class="a" style="left:192.2px;top:333.4px;width:9.3px;height:14px;background:#f4f4f4;border-left:1px solid #ececec"></div>
<div class="t" style="left:70.65px;top:339px;font-size:6.4px;color:#2c2c2c;letter-spacing:0.038px;">83036 Hemoglobin A1c</div>
<svg class="a" style="left:195.5px;top:339.15px" width="3.3" height="2.1" viewBox="0 0 10 10" preserveAspectRatio="none"><path d="M0 0 H10 L5 10 Z" fill="#707070"/></svg>
<div class="inp" style="left:209.7px;top:332.2px;width:41px;height:16.2px;"></div>
<div class="a" style="left:210.5px;top:334px;width:36.5px;height:16.0px;overflow:hidden"><div class="t" style="left:3.94px;top:3px;font-size:7.7px;color:#555;">4/3/2019</div></div>
<svg class="a" style="left:253.6px;top:336.2px" width="9" height="8.4" viewBox="0 0 9 8.4"><rect x="0.6" y="0.5" width="7.6" height="7.4" rx="0.8" fill="#2c7ac4"/><path d="M1 1.1 H3 M3.8 1.1 H5.2 M6 1.1 H7.8" stroke="#4f97d8" stroke-width="1.2"/><rect x="1.6" y="2.3" width="5.4" height="3.6" fill="#587890"/><path d="M1 6.9 H7.8" stroke="#4f97d8" stroke-width="1.3"/></svg>
<div class="cb" style="left:271.5px;top:327.9px;width:86px;height:14px;"></div>
<div class="a" style="left:348.2px;top:327.9px;width:9.3px;height:14px;background:#f4f4f4;border-left:1px solid #ececec"></div>
<div class="t" style="left:274.44px;top:333px;font-size:6.4px;color:#2c2c2c;letter-spacing:-0.003px;">S81.031A Puncture woun</div>
<svg class="a" style="left:351.5px;top:333.65px" width="3.3" height="2.1" viewBox="0 0 10 10" preserveAspectRatio="none"><path d="M0 0 H10 L5 10 Z" fill="#707070"/></svg>
<div class="t" style="left:271.61px;top:344px;font-size:7.45px;color:#dcefff;letter-spacing:0.111px;">S81.031A</div>
<div class="cb" style="left:383px;top:333.4px;width:86px;height:14px;"></div>
<div class="a" style="left:459.7px;top:333.4px;width:9.3px;height:14px;background:#f4f4f4;border-left:1px solid #ececec"></div>
<svg class="a" style="left:463.0px;top:339.15px" width="3.3" height="2.1" viewBox="0 0 10 10" preserveAspectRatio="none"><path d="M0 0 H10 L5 10 Z" fill="#707070"/></svg>
<div class="inp" style="left:477px;top:331.4px;width:24.5px;height:18px;"></div>
<div class="t" style="left:480.8px;top:338px;font-size:7.05px;color:#2c2c2c;">1</div>
<div class="inp" style="left:510px;top:331.4px;width:35px;height:18px;"></div>
<div class="t" style="left:513.92px;top:338px;font-size:7.05px;color:#2c2c2c;">35.00</div>
<div class="inp" style="left:554px;top:331.4px;width:35px;height:18px;"></div>
<div class="t" style="left:557.92px;top:338px;font-size:7.05px;color:#2c2c2c;">35.00</div>
<div class="inp" style="left:597px;top:331.4px;width:35px;height:18px;"></div>
<div class="t" style="left:600.8px;top:338px;font-size:7.05px;color:#2c2c2c;">10</div>
<div class="inp" style="left:640.5px;top:331.4px;width:35.5px;height:18px;"></div>
<div class="t" style="left:644.63px;top:338px;font-size:7.05px;color:#2c2c2c;">0</div>
<div class="t" style="left:683.88px;top:332px;font-size:7.45px;color:#e4f1ff;font-weight:bold;">$</div>
<div class="t" style="left:683.96px;top:342px;font-size:7.45px;color:#dcefff;letter-spacing:0.044px;">0.0000000000</div>
<div class="inp" style="left:741px;top:332.4px;width:56px;height:16px;border-radius:1.5px"></div>
<svg class="a" style="left:790px;top:341.9px" width="6" height="6" viewBox="0 0 6 6"><path d="M5.5 1 L1 5.5 M5.5 3.5 L3.5 5.5" stroke="#555" stroke-width="0.8" fill="none"/></svg>
<div class="inp" style="left:806px;top:331.4px;width:35px;height:18px;"></div>
<div class="inp" style="left:849px;top:331.4px;width:35.5px;height:18px;"></div>
<div class="inp" style="left:893px;top:331.4px;width:35px;height:18px;"></div>
<div class="cb" style="left:957.5px;top:333.9px;width:27px;height:13px;"></div>
<div class="a" style="left:975.5px;top:333.9px;width:9px;height:13px;background:#f4f4f4;border-left:1px solid #ececec"></div>
<div class="t" style="left:960.65px;top:339px;font-size:6.4px;color:#2c2c2c;font-style:italic;color:#8a8a8a;letter-spacing:-0.086px;">Sele</div>
<svg class="a" style="left:978.65px;top:339.15px" width="3.3" height="2.1" viewBox="0 0 10 10" preserveAspectRatio="none"><path d="M0 0 H10 L5 10 Z" fill="#707070"/></svg>
<div class="cb" style="left:999.5px;top:333.9px;width:17.3px;height:13px;"></div>
<div class="a" style="left:1000px;top:336px;width:16.8px;height:14.3px;overflow:hidden"><div class="t" style="left:2.11px;top:3px;font-size:6.4px;color:#2c2c2c;color:#777;letter-spacing:-0.113px;">Billab</div></div>
<svg class="a" style="left:14.4px;top:371.6px" width="6.8" height="6.8" viewBox="0 0 8 8"><rect x="0" y="0" width="8" height="8" rx="1.2" fill="#6c7680"/><path d="M1.7 4.2 L3.3 5.8 L6.4 2.2" fill="none" stroke="#fff" stroke-width="1.5"/></svg>
<div class="t" style="left:37.07px;top:372px;font-size:7.45px;color:#f0f6fc;text-decoration:underline;letter-spacing:0.12px;">Delete</div>
<div class="cb" style="left:67px;top:368px;width:134.5px;height:14px;"></div>
<div class="a" style="left:192.2px;top:368px;width:9.3px;height:14px;background:#f4f4f4;border-left:1px solid #ececec"></div>
<div class="t" style="left:70.52px;top:374px;font-size:6.4px;color:#2c2c2c;letter-spacing:0.002px;">99214 Office Visit, Est. Moderate 25 Minut</div>
<svg class="a" style="left:195.5px;top:373.75px" width="3.3" height="2.1" viewBox="0 0 10 10" preserveAspectRatio="none"><path d="M0 0 H10 L5 10 Z" fill="#707070"/></svg>
<div class="inp" style="left:209.7px;top:366.8px;width:41px;height:16.2px;"></div>
<div class="a" style="left:210.5px;top:369px;width:36.5px;height:16.0px;overflow:hidden"><div class="t" style="left:3.96px;top:3px;font-size:7.7px;color:#555;">2/15/2023</div></div>
<svg class="a" style="left:253.6px;top:370.8px" width="9" height="8.4" viewBox="0 0 9 8.4"><rect x="0.6" y="0.5" width="7.6" height="7.4" rx="0.8" fill="#2c7ac4"/><path d="M1 1.1 H3 M3.8 1.1 H5.2 M6 1.1 H7.8" stroke="#4f97d8" stroke-width="1.2"/><rect x="1.6" y="2.3" width="5.4" height="3.6" fill="#587890"/><path d="M1 6.9 H7.8" stroke="#4f97d8" stroke-width="1.3"/></svg>
<div class="cb" style="left:271.5px;top:362.5px;width:86px;height:14px;"></div>
<div class="a" style="left:348.2px;top:362.5px;width:9.3px;height:14px;background:#f4f4f4;border-left:1px solid #ececec"></div>
<div class="t" style="left:274.65px;top:368px;font-size:6.4px;color:#2c2c2c;letter-spacing:0.048px;">All items checked</div>
<svg class="a" style="left:351.5px;top:368.25px" width="3.3" height="2.1" viewBox="0 0 10 10" preserveAspectRatio="none"><path d="M0 0 H10 L5 10 Z" fill="#707070"/></svg>
<div class="t" style="left:271.63px;top:379px;font-size:7.45px;color:#dcefff;letter-spacing:0.076px;">E08.40,S81.031A,N39.0,A00.9</div>
<div class="cb" style="left:383px;top:368px;width:86px;height:14px;"></div>
<div class="a" style="left:459.7px;top:368px;width:9.3px;height:14px;background:#f4f4f4;border-left:1px solid #ececec"></div>
<svg class="a" style="left:463.0px;top:373.75px" width="3.3" height="2.1" viewBox="0 0 10 10" preserveAspectRatio="none"><path d="M0 0 H10 L5 10 Z" fill="#707070"/></svg>
<div class="inp" style="left:477px;top:366px;width:24.5px;height:18px;"></div>
<div class="t" style="left:480.8px;top:373px;font-size:7.05px;color:#2c2c2c;">1</div>
<div class="inp" style="left:510px;top:366px;width:35px;height:18px;"></div>
<div class="t" style="left:514.21px;top:373px;font-size:7.05px;color:#2c2c2c;">203.00</div>
<div class="inp" style="left:554px;top:366px;width:35px;height:18px;"></div>
<div class="t" style="left:558.21px;top:373px;font-size:7.05px;color:#2c2c2c;">203.00</div>
<div class="inp" style="left:597px;top:366px;width:35px;height:18px;"></div>
<div class="t" style="left:601.12px;top:373px;font-size:7.05px;color:#2c2c2c;">90</div>
<div class="inp" style="left:640.5px;top:366px;width:35.5px;height:18px;"></div>
<div class="t" style="left:644.63px;top:373px;font-size:7.05px;color:#2c2c2c;">0</div>
<div class="t" style="left:683.88px;top:366px;font-size:7.45px;color:#e4f1ff;font-weight:bold;">$</div>
<div class="t" style="left:683.96px;top:377px;font-size:7.45px;color:#dcefff;letter-spacing:0.044px;">0.0000000000</div>
<div class="inp" style="left:741px;top:367px;width:56px;height:16px;border-radius:1.5px"></div>
<svg class="a" style="left:790px;top:376.5px" width="6" height="6" viewBox="0 0 6 6"><path d="M5.5 1 L1 5.5 M5.5 3.5 L3.5 5.5" stroke="#555" stroke-width="0.8" fill="none"/></svg>
<div class="inp" style="left:806px;top:366px;width:35px;height:18px;"></div>
<div class="inp" style="left:849px;top:366px;width:35.5px;height:18px;"></div>
<div class="inp" style="left:893px;top:366px;width:35px;height:18px;"></div>
<div class="cb" style="left:957.5px;top:368.5px;width:27px;height:13px;"></div>
<div class="a" style="left:975.5px;top:368.5px;width:9px;height:13px;background:#f4f4f4;border-left:1px solid #ececec"></div>
<div class="t" style="left:960.65px;top:374px;font-size:6.4px;color:#2c2c2c;font-style:italic;color:#8a8a8a;letter-spacing:-0.086px;">Sele</div>
<svg class="a" style="left:978.65px;top:373.75px" width="3.3" height="2.1" viewBox="0 0 10 10" preserveAspectRatio="none"><path d="M0 0 H10 L5 10 Z" fill="#707070"/></svg>
<div class="cb" style="left:999.5px;top:368.5px;width:17.3px;height:13px;"></div>
<div class="a" style="left:1000px;top:371px;width:16.8px;height:14.3px;overflow:hidden"><div class="t" style="left:2.11px;top:3px;font-size:6.4px;color:#2c2c2c;color:#777;letter-spacing:-0.113px;">Billab</div></div>
<svg class="a" style="left:14.4px;top:407.0px" width="6.8" height="6.8" viewBox="0 0 8 8"><rect x="0" y="0" width="8" height="8" rx="1.2" fill="#6c7680"/><path d="M1.7 4.2 L3.3 5.8 L6.4 2.2" fill="none" stroke="#fff" stroke-width="1.5"/></svg>
<div class="t" style="left:37.07px;top:407px;font-size:7.45px;color:#f0f6fc;text-decoration:underline;letter-spacing:0.12px;">Delete</div>
<div class="cb" style="left:67px;top:403.4px;width:134.5px;height:14px;"></div>
<div class="a" style="left:192.2px;top:403.4px;width:9.3px;height:14px;background:#f4f4f4;border-left:1px solid #ececec"></div>
<div class="t" style="left:70.67px;top:409px;font-size:6.4px;color:#2c2c2c;letter-spacing:0.039px;">J2920 Methylprednisolone injection</div>
<svg class="a" style="left:195.5px;top:409.15px" width="3.3" height="2.1" viewBox="0 0 10 10" preserveAspectRatio="none"><path d="M0 0 H10 L5 10 Z" fill="#707070"/></svg>
<div class="inp" style="left:209.7px;top:402.2px;width:41px;height:16.2px;"></div>
<div class="a" style="left:210.5px;top:404px;width:36.5px;height:16.0px;overflow:hidden"><div class="t" style="left:3.96px;top:3px;font-size:7.7px;color:#555;">2/15/2023</div></div>
<svg class="a" style="left:253.6px;top:406.2px" width="9" height="8.4" viewBox="0 0 9 8.4"><rect x="0.6" y="0.5" width="7.6" height="7.4" rx="0.8" fill="#2c7ac4"/><path d="M1 1.1 H3 M3.8 1.1 H5.2 M6 1.1 H7.8" stroke="#4f97d8" stroke-width="1.2"/><rect x="1.6" y="2.3" width="5.4" height="3.6" fill="#587890"/><path d="M1 6.9 H7.8" stroke="#4f97d8" stroke-width="1.3"/></svg>
<div class="cb" style="left:271.5px;top:397.9px;width:86px;height:14px;"></div>
<div class="a" style="left:348.2px;top:397.9px;width:9.3px;height:14px;background:#f4f4f4;border-left:1px solid #ececec"></div>
<div class="t" style="left:274.65px;top:403px;font-size:6.4px;color:#2c2c2c;letter-spacing:0.048px;">All items checked</div>
<svg class="a" style="left:351.5px;top:403.65px" width="3.3" height="2.1" viewBox="0 0 10 10" preserveAspectRatio="none"><path d="M0 0 H10 L5 10 Z" fill="#707070"/></svg>
<div class="t" style="left:271.63px;top:414px;font-size:7.45px;color:#dcefff;letter-spacing:0.076px;">E08.40,S81.031A,N39.0,A00.9</div>
<div class="cb" style="left:383px;top:403.4px;width:86px;height:14px;"></div>
<div class="a" style="left:459.7px;top:403.4px;width:9.3px;height:14px;background:#f4f4f4;border-left:1px solid #ececec"></div>
<svg class="a" style="left:463.0px;top:409.15px" width="3.3" height="2.1" viewBox="0 0 10 10" preserveAspectRatio="none"><path d="M0 0 H10 L5 10 Z" fill="#707070"/></svg>
<div class="inp" style="left:477px;top:401.4px;width:24.5px;height:18px;"></div>
<div class="t" style="left:480.8px;top:408px;font-size:7.05px;color:#2c2c2c;">1</div>
<div class="inp" style="left:510px;top:401.4px;width:35px;height:18px;"></div>
<div class="t" style="left:514.13px;top:408px;font-size:7.05px;color:#2c2c2c;">99.00</div>
<div class="inp" style="left:554px;top:401.4px;width:35px;height:18px;"></div>
<div class="t" style="left:558.13px;top:408px;font-size:7.05px;color:#2c2c2c;">99.00</div>
<div class="inp" style="left:597px;top:401.4px;width:35px;height:18px;"></div>
<div class="t" style="left:601.17px;top:408px;font-size:7.05px;color:#2c2c2c;">60</div>
<div class="inp" style="left:640.5px;top:401.4px;width:35.5px;height:18px;"></div>
<div class="t" style="left:644.63px;top:408px;font-size:7.05px;color:#2c2c2c;">0</div>
<div class="t" style="left:683.88px;top:401px;font-size:7.45px;color:#e4f1ff;font-weight:bold;">$</div>
<div class="t" style="left:683.96px;top:412px;font-size:7.45px;color:#dcefff;letter-spacing:0.044px;">0.0000000000</div>
<div class="inp" style="left:741px;top:402.4px;width:56px;height:16px;border-radius:1.5px"></div>
<svg class="a" style="left:790px;top:411.9px" width="6" height="6" viewBox="0 0 6 6"><path d="M5.5 1 L1 5.5 M5.5 3.5 L3.5 5.5" stroke="#555" stroke-width="0.8" fill="none"/></svg>
<div class="inp" style="left:806px;top:401.4px;width:35px;height:18px;"></div>
<div class="inp" style="left:849px;top:401.4px;width:35.5px;height:18px;"></div>
<div class="inp" style="left:893px;top:401.4px;width:35px;height:18px;"></div>
<div class="cb" style="left:957.5px;top:403.9px;width:27px;height:13px;"></div>
<div class="a" style="left:975.5px;top:403.9px;width:9px;height:13px;background:#f4f4f4;border-left:1px solid #ececec"></div>
<div class="t" style="left:960.65px;top:409px;font-size:6.4px;color:#2c2c2c;font-style:italic;color:#8a8a8a;letter-spacing:-0.086px;">Sele</div>
<svg class="a" style="left:978.65px;top:409.15px" width="3.3" height="2.1" viewBox="0 0 10 10" preserveAspectRatio="none"><path d="M0 0 H10 L5 10 Z" fill="#707070"/></svg>
<div class="cb" style="left:999.5px;top:403.9px;width:17.3px;height:13px;"></div>
<div class="a" style="left:1000px;top:406px;width:16.8px;height:14.3px;overflow:hidden"><div class="t" style="left:2.11px;top:3px;font-size:6.4px;color:#2c2c2c;color:#777;letter-spacing:-0.113px;">Billab</div></div>
<div class="t" style="left:476.64px;top:439px;font-size:7.45px;color:#484848;">3</div>
<div class="t" style="left:510.12px;top:439px;font-size:7.45px;color:#484848;letter-spacing:0.12px;">$ 337.00</div>
<div class="t" style="left:553.62px;top:439px;font-size:7.45px;color:#484848;letter-spacing:0.113px;">$ 337.00</div>
<div class="t" style="left:596.62px;top:439px;font-size:7.45px;color:#484848;letter-spacing:0.12px;">$ 160.00</div>
<div class="t" style="left:640.62px;top:439px;font-size:7.45px;color:#484848;letter-spacing:0.12px;">$ 0.00</div>
<div class="t" style="left:683.82px;top:434px;font-size:7.45px;color:#484848;">$</div>
<div class="t" style="left:683.96px;top:444px;font-size:7.45px;color:#484848;letter-spacing:0.044px;">0.0000000000</div>
<div class="a" style="left:1016.6px;top:21.5px;width:1px;height:445.5px;background:#e0e4ec"></div>
<div class="a" style="left:7px;top:458.6px;width:1011px;height:8.4px;background:#f0f0f0"></div>
<div class="a" style="left:19px;top:458.6px;width:907.5px;height:8.4px;background:#c8c8c8"></div>
<div class="a" style="left:7px;top:457.8px;width:1009.8px;height:1px;background:#a8a8a8"></div>
<svg class="a" style="left:11.8px;top:460.6px" width="3" height="5" viewBox="0 0 3 5"><path d="M3 0 V5 L0 2.5 Z" fill="#a6a6a6"/></svg>
<svg class="a" style="left:1009.6px;top:460.6px" width="3" height="5" viewBox="0 0 3 5"><path d="M0 0 V5 L3 2.5 Z" fill="#333"/></svg>
<div class="a" style="left:1018.3px;top:21px;width:5.7px;height:446px;background:#f0f0f0"></div>
<div class="a" style="left:1019px;top:32.7px;width:5px;height:420px;background:#c6c6c6"></div>
<svg class="a" style="left:1019.2px;top:25.6px" width="4.4" height="2.6" viewBox="0 0 4.4 2.6"><path d="M0 2.6 H4.4 L2.2 0 Z" fill="#999"/></svg>
</body></html>
